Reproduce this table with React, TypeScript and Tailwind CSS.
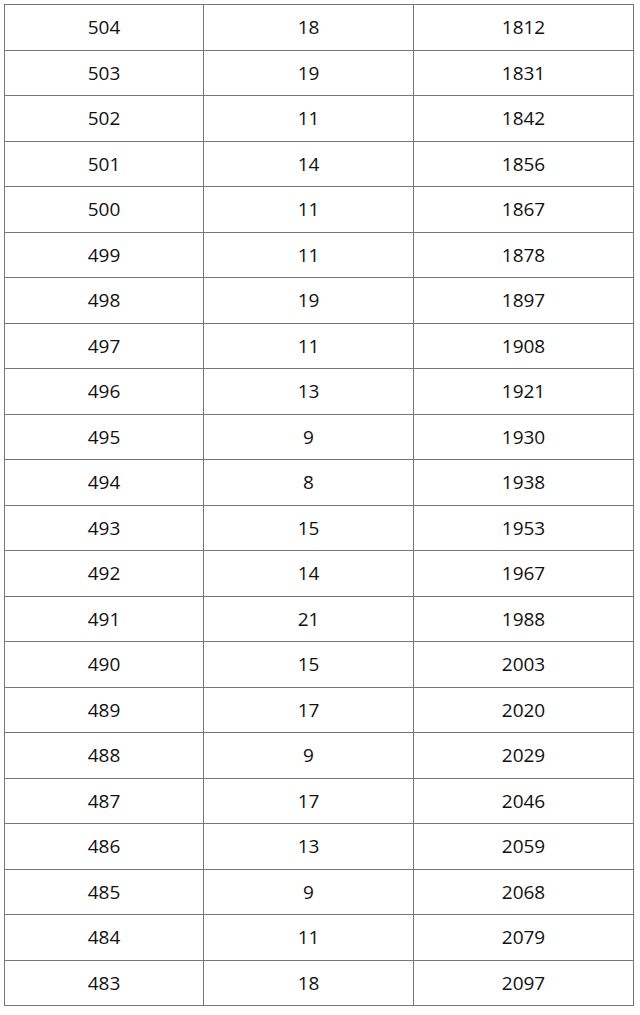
const ROWS: [number, number, number][] = [
  [504, 18, 1812],
  [503, 19, 1831],
  [502, 11, 1842],
  [501, 14, 1856],
  [500, 11, 1867],
  [499, 11, 1878],
  [498, 19, 1897],
  [497, 11, 1908],
  [496, 13, 1921],
  [495, 9, 1930],
  [494, 8, 1938],
  [493, 15, 1953],
  [492, 14, 1967],
  [491, 21, 1988],
  [490, 15, 2003],
  [489, 17, 2020],
  [488, 9, 2029],
  [487, 17, 2046],
  [486, 13, 2059],
  [485, 9, 2068],
  [484, 11, 2079],
  [483, 18, 2097],
];

export default function App() {
  return (
    <div className="w-[640px] h-[1015px] bg-white pt-[4px] pl-[4px] font-['Open_Sans',sans-serif] text-[19px] text-[#111111]">
      <div className="w-[630px] border-l border-t border-[#767676]">
        {ROWS.map(([score, count, total]) => (
          <div key={score} className="grid grid-cols-[199px_210px_220px] h-[45.5px]">
            <div className="flex items-center justify-center border-r border-b border-[#767676]">{score}</div>
            <div className="flex items-center justify-center border-r border-b border-[#767676]">{count}</div>
            <div className="flex items-center justify-center border-r border-b border-[#767676]">{total}</div>
          </div>
        ))}
      </div>
    </div>
  );
}
